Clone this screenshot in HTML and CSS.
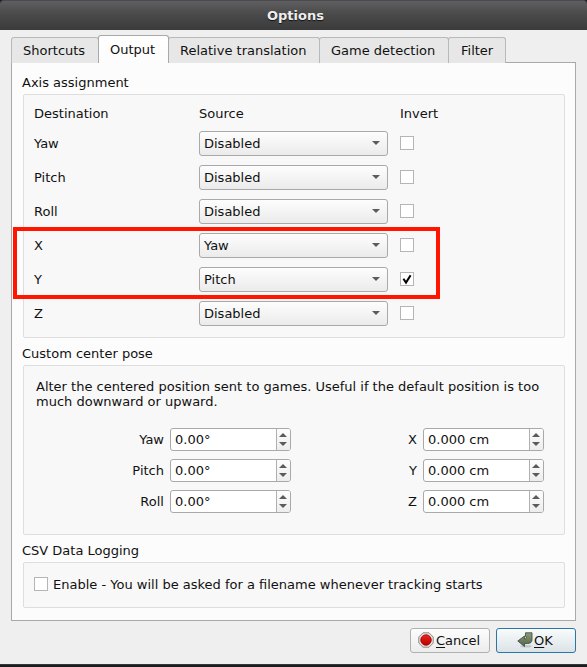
FILE: index.html
```html
<!DOCTYPE html>
<html lang="en">
<head>
<meta charset="utf-8">
<title>Options</title>
<link rel="stylesheet" href="styles.css">
</head>
<body>
<div class="window">
  <header class="titlebar">Options</header>
  <main class="content">
    <nav class="tabs">
      <div class="tab t-shortcuts">Shortcuts</div>
      <div class="tab t-output active">Output</div>
      <div class="tab t-relative">Relative translation</div>
      <div class="tab t-game">Game detection</div>
      <div class="tab t-filter">Filter</div>
    </nav>
    <div class="panel">
      <h2 class="heading">Axis assignment</h2>
      <section class="group axis">
        <div class="row head"><span>Destination</span><span>Source</span><span class="invert">Invert</span></div>
        <div class="row"><span>Yaw</span><div class="select">Disabled<i class="arrow"></i></div><i class="check"></i></div>
        <div class="row"><span>Pitch</span><div class="select">Disabled<i class="arrow"></i></div><i class="check"></i></div>
        <div class="row"><span>Roll</span><div class="select">Disabled<i class="arrow"></i></div><i class="check"></i></div>
        <div class="row"><span>X</span><div class="select">Yaw<i class="arrow"></i></div><i class="check"></i></div>
        <div class="row"><span>Y</span><div class="select">Pitch<i class="arrow"></i></div><i class="check"><svg width="12" height="12" viewBox="0 0 12 12"><path d="M2.4 5.8L5 9.6L9.6 2.2" fill="none" stroke="#000" stroke-width="2"/></svg></i></div>
        <div class="row"><span>Z</span><div class="select">Disabled<i class="arrow"></i></div><i class="check"></i></div>
        <div class="highlight"></div>
      </section>
      <h2 class="heading">Custom center pose</h2>
      <section class="group pose">
        <p class="note">Alter the centered position sent to games. Useful if the default position is too<br>much downward or upward.</p>
        <div class="pose-grid">
          <label>Yaw</label><div class="spin">0.00°<div class="steps"><i class="up"></i><i class="down"></i></div></div>
          <label>X</label><div class="spin">0.000 cm<div class="steps"><i class="up"></i><i class="down"></i></div></div>
          <label>Pitch</label><div class="spin">0.00°<div class="steps"><i class="up"></i><i class="down"></i></div></div>
          <label>Y</label><div class="spin">0.000 cm<div class="steps"><i class="up"></i><i class="down"></i></div></div>
          <label>Roll</label><div class="spin">0.00°<div class="steps"><i class="up"></i><i class="down"></i></div></div>
          <label>Z</label><div class="spin">0.000 cm<div class="steps"><i class="up"></i><i class="down"></i></div></div>
        </div>
      </section>
      <h2 class="heading">CSV Data Logging</h2>
      <section class="group csv"><i class="check"></i><span>Enable - You will be asked for a filename whenever tracking starts</span></section>
    </div>
    <div class="buttons">
      <div class="button cancel">
        <svg width="16" height="16" viewBox="0 0 16 16">
          <defs><linearGradient id="red" x1="0" y1="0" x2="0" y2="1"><stop offset="0" stop-color="#ee2222"/><stop offset="1" stop-color="#b80000"/></linearGradient></defs>
          <path d="M5 .8H11L15.2 5V11L11 15.2H5L.8 11V5Z" fill="#e8e8e4" stroke="#888a85"/>
          <circle cx="8" cy="8" r="5.3" fill="url(#red)" stroke="#a40000" stroke-width=".8"/>
        </svg>
        <span><u>C</u>ancel</span>
      </div>
      <div class="button ok">
        <svg width="16" height="16" viewBox="0 0 16 16">
          <defs><linearGradient id="green" x1="0" y1="0" x2="0" y2="1"><stop offset="0" stop-color="#8b9b7b"/><stop offset="1" stop-color="#52634a"/></linearGradient></defs>
          <ellipse cx="9" cy="14.2" rx="6" ry="1.4" fill="#000" opacity=".14"/>
          <path d="M8.5 .8H15V7.5Q15 11.5 10.5 11.5H7.5V14.5L.8 9L7.5 4V7H8Q9.3 7 9.3 5.8V4.5H8.5Z" fill="url(#green)" stroke="#46533f" stroke-width=".9"/>
        </svg>
        <span><u>O</u>K</span>
      </div>
    </div>
  </main>
  <footer class="edge"></footer>
</div>
</body>
</html>
```
FILE: styles.css
```css
* { box-sizing: border-box; }
body { margin: 0; background: #1d1f20; font: 13px/15px "DejaVu Sans", sans-serif; color: #111; }
.window { width: 587px; height: 667px; display: flex; flex-direction: column; overflow: hidden; }
.titlebar { height: 30px; border-top: 1px solid #4b4b4d; border-radius: 4px 4px 0 0; background: linear-gradient(#5f5f61, #4a4a4b 45%, #3b3b3c); color: #eee; font-weight: bold; text-align: center; line-height: 29px; padding-left: 4px; text-shadow: 0 1px 1px #111; }
.content { height: 634px; padding: 5px 11px 0; background: #efefef; }
.edge { height: 3px; background: #1b1d1e; border-top: 1px solid #343637; }

.tabs { display: flex; align-items: flex-end; height: 28px; margin-bottom: -1px; }
.tab { height: 26px; margin-left: -1px; padding: 5px 0 0 11px; white-space: nowrap; border: 1px solid #b9b9b9; border-bottom: 0; border-radius: 3px 3px 0 0; background: #e7e7e7; }
.tab.active { position: relative; height: 28px; padding-top: 6px; background: linear-gradient(#fff, #fcfcfc); border-color: #a9a9a9; }
.t-shortcuts { width: 88px; margin-left: 0; }
.t-output { width: 71px; }
.t-relative { width: 152px; }
.t-game { width: 130px; }
.t-filter { width: 58px; padding-left: 12px; }

.panel { width: 565px; height: 559px; padding: 12px 10px 0; border: 1px solid #a9a9a9; background: #fcfcfc; }
.heading { margin: 0; height: 19px; font-size: 13px; font-weight: normal; line-height: 15px; }
.group { width: 542px; margin-left: 1px; border: 1px solid #dedede; border-radius: 2px; background: #f8f8f8; }

.axis { position: relative; height: 244px; padding: 6px 0 0 10px; margin-bottom: 8px; }
.row { display: grid; grid-template-columns: 165px 189px auto; align-items: center; height: 34px; }
.row.head { height: 25px; }
.row .check, .row .invert { margin-left: 12px; }
.select { display: flex; align-items: center; justify-content: space-between; height: 25px; padding: 0 7px 0 4px; border: 1px solid #a9a9a9; border-radius: 3px; background: linear-gradient(#fdfdfd, #ebebeb); }
.arrow, .up, .down { width: 0; height: 0; border: 4px solid transparent; }
.arrow, .down { border-top-color: #5b5b5b; border-bottom-width: 0; }
.up { border-bottom-color: #5b5b5b; border-top-width: 0; }
.check { display: block; width: 14px; height: 14px; border: 1px solid #b5b5b5; background: #fff; }
.check svg { display: block; }
.highlight { position: absolute; left: -11px; top: 132px; width: 427px; height: 72px; border: 4px solid #ff1500; }

.pose { height: 170px; padding: 13px 0 0 12px; margin-bottom: 8px; }
.note { margin: 0 0 19px; white-space: nowrap; }
.pose-grid { display: grid; grid-template-columns: 134px 121px 132px 121px; grid-auto-rows: 23px; row-gap: 8px; align-items: center; }
.pose-grid label { text-align: right; padding-right: 6px; }
.spin { display: flex; align-items: center; justify-content: space-between; height: 23px; padding-left: 4px; border: 1px solid #a9a9a9; border-radius: 3px; background: #fff; overflow: hidden; }
.steps { display: flex; flex-direction: column; align-items: center; justify-content: space-between; width: 14px; height: 21px; padding: 4px 1px 4px 0; border-left: 1px solid #b0b0b0; background: linear-gradient(#fdfdfd, #ededed); }

.csv { display: flex; align-items: center; height: 46px; padding-left: 10px; gap: 5px; white-space: nowrap; }
.csv .check { flex: none; margin-top: -2px; }
.csv span { margin-top: -2px; }

.buttons { display: flex; justify-content: flex-end; gap: 6px; margin-top: 7px; }
.button { display: flex; align-items: center; width: 80px; height: 25px; border: 1px solid #b0b0b0; border-radius: 3px; background: linear-gradient(#fdfdfd, #ececec); }
.button svg { flex: none; margin-top: -2px; }
.cancel { padding-left: 7px; gap: 2px; }
.ok { padding-left: 20px; gap: 1px; border-color: #2a76a4; background: linear-gradient(#f9fbfc, #dbe3e8); }
u { text-underline-offset: 2px; }
```
